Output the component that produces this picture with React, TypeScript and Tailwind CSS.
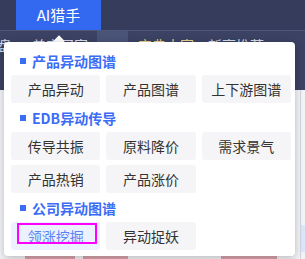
const groups = [
  { title: "产品异动图谱", items: ["产品异动", "产品图谱", "上下游图谱"] },
  { title: "EDB异动传导", items: ["传导共振", "原料降价", "需求景气", "产品热销", "产品涨价"] },
  { title: "公司异动图谱", items: ["领涨挖掘", "异动捉妖"] },
];

const App = () => {
  return (
    <div className="relative w-[305px] h-[259px] overflow-hidden bg-[#f3f4f8] font-['Noto_Sans_CJK_SC',sans-serif]">
      {/* Top nav */}
      <div className="h-[30px] bg-[#363c5b] flex">
        <div className="ml-[16px] w-[85px] bg-[#3369f0] text-white text-[15px] flex items-center justify-center">
          AI猎手
        </div>
      </div>
      <div className="h-px bg-[#4f5879]" />
      {/* Sub nav */}
      <div className="h-[59px] bg-[#3b4263] text-[14px] leading-[24px] text-[#d9dce8] flex items-start pt-[2px] whitespace-nowrap">
        <span className="-ml-[16px] w-[48px]">看盘</span>
        <span className="w-[60px]">盖宝买家</span>
        <span className="ml-[5px] w-[31px] h-[12px] -mt-[2px] bg-[#4a5378]" />
        <span className="ml-[10px] w-[70px] text-[#e8d089]">宝典大家</span>
        <span>新高推荐</span>
      </div>
      {/* Page body behind popup */}
      <div className="flex h-[169px]">
        <div className="flex-1 flex flex-col justify-end">
          <div className="h-[3px] flex gap-[8px] pl-[25px]">
            <span className="w-[50px] bg-[#d9a3ab]" />
            <span className="w-[45px] bg-[#d9a3ab]" />
            <span className="w-[56px] ml-[85px] bg-[#d9a3ab]" />
          </div>
        </div>
        <div className="w-[5px] border-l border-[#d5d6e0] flex flex-col justify-end pb-[7px]">
          <div className="h-[27px] bg-[#dbe5fb]" />
        </div>
      </div>

      {/* Popup arrow */}
      <div className="absolute left-[55px] top-[37px] w-[8px] h-[8px] bg-white rotate-45" />

      {/* Popup */}
      <div className="absolute left-[4px] top-[42px] w-[291px] h-[214px] bg-white rounded-[4px] shadow-[0_2px_8px_rgba(0,0,0,0.25)] pt-[4px] pl-[7px] pr-[4px]">
        {groups.map((g) => (
          <div key={g.title}>
            <div className="mt-[5px] mb-[4px] h-[20px] pl-[9px] flex items-center gap-[6px] text-[14px] font-bold text-[#3b6cf6]">
              <span className="w-[6px] h-[6px] bg-[#3b6cf6]" />
              {g.title}
            </div>
            <div className="grid grid-cols-3 gap-x-[6px] gap-y-[5px]">
              {g.items.map((it) => {
                const active = it === "领涨挖掘";
                return (
                  <div
                    key={it}
                    className={
                      active
                        ? "relative h-[28px] rounded-[3px] bg-[#ebf1fe] text-[#5b82f3] text-[14px] flex items-center justify-center"
                        : "h-[28px] rounded-[3px] bg-[#f5f5f7] text-[#333333] text-[14px] flex items-center justify-center"
                    }
                  >
                    {it}
                    {active && (
                      <span className="absolute left-[6px] top-[1px] w-[80px] h-[21px] border-[2px] border-[#ff00ff]" />
                    )}
                  </div>
                );
              })}
            </div>
          </div>
        ))}
      </div>
    </div>
  );
};

export default App;
